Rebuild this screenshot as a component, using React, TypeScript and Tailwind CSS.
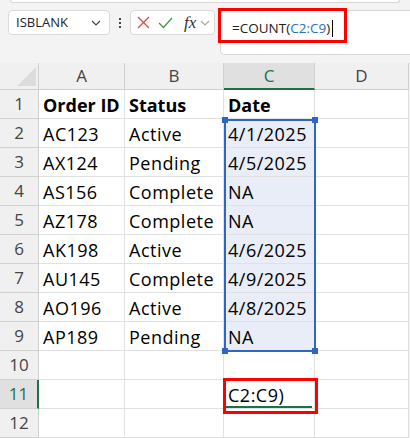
import React from "react";

const rows: string[][] = [
  ["Order ID", "Status", "Date"],
  ["AC123", "Active", "4/1/2025"],
  ["AX124", "Pending", "4/5/2025"],
  ["AS156", "Complete", "NA"],
  ["AZ178", "Complete", "NA"],
  ["AK198", "Active", "4/6/2025"],
  ["AU145", "Complete", "4/9/2025"],
  ["AO196", "Active", "4/8/2025"],
  ["AP189", "Pending", "NA"],
  ["", "", ""],
  ["", "", "C2:C9)"],
  ["", "", ""],
];

function Chevron({ className }: { className?: string }) {
  return (
    <svg width="10" height="6" viewBox="0 0 10 6" className={className}>
      <path d="M1 1l4 4 4-4" fill="none" stroke="currentColor" strokeWidth="1.2" />
    </svg>
  );
}

function Toolbar() {
  return (
    <div className="relative h-[60px]">
      <div className="flex items-start pl-[8px] pt-[7px]">
        <div className="flex h-[25px] w-[102px] items-center justify-between rounded-[4px] border border-[#dadada] bg-white pl-[7px] pr-[8px]">
          <span className="text-[13px] text-[#222]">ISBLANK</span>
          <Chevron className="text-[#444]" />
        </div>
        <div className="flex h-[25px] w-[20px] flex-col items-center justify-center gap-[2px]">
          <span className="h-[2px] w-[2px] bg-[#444]" />
          <span className="h-[2px] w-[2px] bg-[#444]" />
          <span className="h-[2px] w-[2px] bg-[#444]" />
        </div>
        <div className="flex h-[25px] w-[85px] items-center rounded-[4px] border border-[#dadada] bg-white pl-[6px]">
          <svg width="13" height="13" viewBox="0 0 13 13">
            <path d="M1 1l11 11M12 1L1 12" stroke="#e0474c" strokeWidth="1.3" />
          </svg>
          <svg width="15" height="12" viewBox="0 0 15 12" className="ml-[8px]">
            <path d="M1 6l4.5 4.5L14 1" fill="none" stroke="#3d9a4c" strokeWidth="1.3" />
          </svg>
          <span className="ml-[11px] font-['Liberation_Serif',serif] text-[17px] italic leading-none text-[#333]">
            fx
          </span>
          <Chevron className="ml-[4px] text-[#aaa]" />
        </div>
        <div className="ml-[5px] h-[45px] flex-1 rounded-l-[5px] border border-r-0 border-[#d6d6d6] bg-white pl-[11px] pt-[4px]">
          <span className="text-[13.5px] text-[#222]">
            =COUNT(<span className="text-[#2f6fbd]">C2:C9</span>)
          </span>
          <span className="ml-[2px] inline-block h-[17px] w-[1px] translate-y-[4px] bg-black" />
        </div>
      </div>
      <div className="absolute left-[218px] top-[5px] h-[35px] w-[129px] border-[3px] border-[#ff0000]" />
    </div>
  );
}

const colW = ["w-[86px]", "w-[99px]", "w-[91px]", "w-[94px]"];

function HeaderRow() {
  return (
    <div className="flex h-[27px]">
      <div className="relative h-full w-[39px] border-b border-r border-[#cfcfcf] bg-[#f0f0f0]">
        <svg width="20" height="20" viewBox="0 0 20 20" className="absolute left-[17px] top-[4px]">
          <path d="M19 0V19H0Z" fill="#dcdcdc" />
        </svg>
      </div>
      {["A", "B", "C", "D"].map((c, i) => (
        <div
          key={c}
          className={`${colW[i]} flex h-full items-center justify-center border-r text-[17px] ${
            c === "C"
              ? "border-b-2 border-r-[#d0d0d0] border-b-[#1e7145] bg-[#e0e0e0] text-[#1e7145]"
              : "border-b border-[#d0d0d0] bg-[#f0f0f0] text-[#444]"
          }`}
        >
          {c}
        </div>
      ))}
    </div>
  );
}

export default function App() {
  return (
    <div className="relative h-[438px] w-[410px] overflow-hidden bg-[#f3f3f3] font-['Open_Sans',sans-serif]">
      <div className="mx-[10px] h-[3px] rounded-b-[5px] border-x border-b border-[#d6d6d6] bg-white" />
      <Toolbar />
      <div className="relative">
        <HeaderRow />
        {rows.map((r, ri) => {
          const n = ri + 1;
          const active = n === 11;
          return (
            <div key={n} className="flex h-[29px]">
              <div
                className={`flex h-full w-[39px] items-center justify-center border-b text-[17px] ${
                  active
                    ? "border-r-2 border-b-[#d0d0d0] border-r-[#1e7145] bg-[#e0e0e0] text-[#1e7145]"
                    : "border-r border-[#d0d0d0] bg-[#f0f0f0] text-[#444]"
                }`}
              >
                {n}
              </div>
              {[0, 1, 2, 3].map((ci) => {
                const v = r[ci] ?? "";
                const sel = ci === 2 && n >= 2 && n <= 9;
                return (
                  <div
                    key={ci}
                    className={`${colW[ci]} relative flex h-full items-center whitespace-nowrap border-b border-r border-[#e1e1e1] pl-[4px] pt-[2px] text-[18px] text-black ${
                      sel ? "bg-[#e8edf7]" : "bg-white"
                    } ${n === 1 ? "font-bold" : "tracking-[0.5px]"}`}
                  >
                    {v}
                    {active && ci === 2 && (
                      <div className="absolute bottom-0 left-[2px] right-[2px] h-[2px] bg-[#1e7145]" />
                    )}
                  </div>
                );
              })}
            </div>
          );
        })}
        <div className="absolute left-[224px] top-[56px] h-[233px] w-[92px] border-2 border-[#2e66c2]">
          <span className="absolute -left-[4px] -top-[4px] h-[6px] w-[6px] bg-[#2e66c2]" />
          <span className="absolute -right-[4px] -top-[4px] h-[6px] w-[6px] bg-[#2e66c2]" />
          <span className="absolute -bottom-[4px] -left-[4px] h-[6px] w-[6px] bg-[#2e66c2]" />
          <span className="absolute -bottom-[4px] -right-[4px] h-[6px] w-[6px] bg-[#2e66c2]" />
        </div>
        <div className="absolute left-[223px] top-[315px] h-[36px] w-[95px] border-[3px] border-[#ff0000]" />
      </div>
    </div>
  );
}
